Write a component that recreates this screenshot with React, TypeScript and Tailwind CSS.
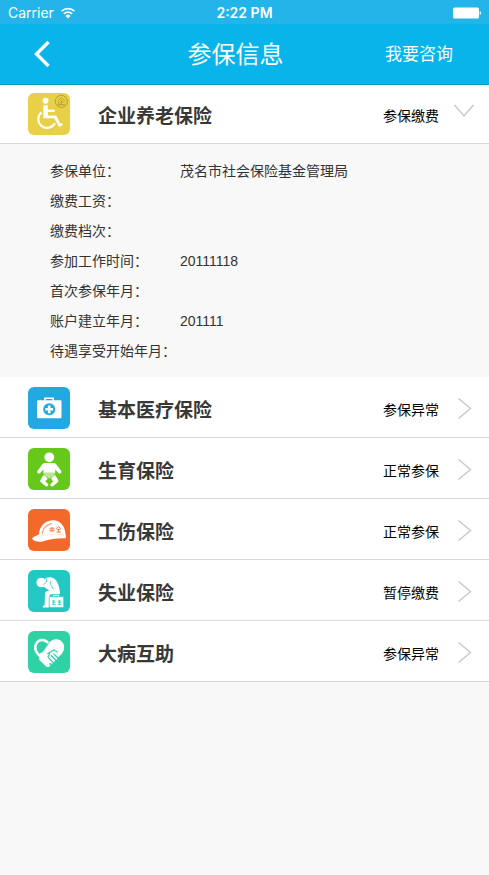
import { useState } from "react";
import type { ReactNode } from "react";

type Seguro = {
  id: string;
  name: string;
  status: string;
  icon: ReactNode;
  details?: { label: string; value: string }[];
};

function WheelchairIcon() {
  return (
    <svg viewBox="0 0 42 42" className="size-[42px]" aria-hidden="true">
      <rect width="42" height="42" rx="6" fill="#e9d147" />
      <circle cx="17.5" cy="7.8" r="3" fill="#fff" />
      <path d="M15.3 12.2h4.5v4.3l7 .2v2.3l-7-.1v3.6h8.3l4.4 8.3 1.6-.7.8 2-3.8 1.8-5-8.6H15.3z" fill="#fff" />
      <path d="M13.4 19.4a8.8 8.8 0 1 0 13.5 10.8" fill="none" stroke="#fff" strokeWidth="2.1" />
      <circle cx="33.3" cy="8.4" r="6" fill="none" stroke="#a8922b" strokeWidth=".8" />
      <path d="M29.5 8.3l3.8-3.5 3.8 3.5M33.3 7v4.7M33.3 9.2h2.3M31 8.8v2.9M29.7 11.8h7.2" fill="none" stroke="#a8922b" strokeWidth=".8" />
    </svg>
  );
}

function MedicalIcon() {
  return (
    <svg viewBox="0 0 42 42" className="size-[42px]" aria-hidden="true">
      <rect width="42" height="42" rx="6" fill="#22a9e1" />
      <path d="M17 13.5v-2.3h8.2v2.3" fill="none" stroke="#fff" strokeWidth="1.6" />
      <rect x="9" y="13.2" width="24.5" height="18" rx="1.2" fill="#fff" />
      <circle cx="21.2" cy="22.3" r="6" fill="#22a9e1" />
      <path d="M21.2 18.4v7.8M17.3 22.3h7.8" stroke="#fff" strokeWidth="2.6" />
    </svg>
  );
}

function BabyIcon() {
  return (
    <svg viewBox="0 0 42 42" className="size-[42px]" aria-hidden="true">
      <rect width="42" height="42" rx="6" fill="#67c81c" />
      <circle cx="21.3" cy="9.3" r="4.9" fill="#fff" />
      <path d="M17 15h8.6c1.2 0 2.1.5 2.8 1.5l4.7 6.2c1.3 2-1.1 3.9-2.7 2.2l-3.2-3.3v4H15.4v-4l-3.2 3.3c-1.6 1.7-4-.2-2.7-2.2l4.7-6.2c.7-1 1.6-1.5 2.8-1.5z" fill="#fff" />
      <path d="M15.4 24.6h11.8l-1.3 3.6-4.6 2.2-4.6-2.2z" fill="#b9e69a" />
      <path d="M15.4 27l4.3 3.4-2.3 3 2.5 2.3c1.5 1.7-.9 3.7-2.6 2.3l-4.5-3.7c-.8-.7-.8-1.6-.3-2.4zM27.2 27l-4.3 3.4 2.3 3-2.5 2.3c-1.5 1.7.9 3.7 2.6 2.3l4.5-3.7c.8-.7.8-1.6.3-2.4z" fill="#fff" />
    </svg>
  );
}

function HelmetIcon() {
  return (
    <svg viewBox="0 0 42 42" className="size-[42px]" aria-hidden="true">
      <rect width="42" height="42" rx="6" fill="#f4692a" />
      <path d="M4.3 29.7c-.2-1.5 2.8-2.7 6.5-4.3.8-8 6-13.6 13.2-14.1 8-.5 13.4 5.7 13.7 15.1.7.7.5 2.5-.6 2.8-8.1-.2-15 .9-22.4 3.3-4 .7-9.8-.4-10.4-2.8z" fill="#fff" />
      <path d="M14.3 25.1c.5-5.6 3.7-9.2 9.7-10.7" fill="none" stroke="#f7a581" strokeWidth="1.2" />
      <path d="M10.7 27.4c8-2 17-3 25.6-1.6" fill="none" stroke="#fbd2bf" strokeWidth=".5" />
      <path d="M21.5 19.3h5M24 18v1.4M22.7 20.3l3 2.8M25.5 20.3l-3.3 2.8M21.2 21.2h5.5M28 19.7l2.5-1.9 2.5 1.9M28.8 20.4h3.5M30.5 20v3M28.2 23h4.7" fill="none" stroke="#f4692a" strokeWidth=".8" />
    </svg>
  );
}

function UnemployedIcon() {
  return (
    <svg viewBox="0 0 42 42" className="size-[42px]" aria-hidden="true">
      <rect width="42" height="42" rx="6" fill="#23c8c2" />
      <path d="M17.5 8.2c2.6-1.5 6.8-1.3 9.2.8 3.2 3 5.2 8.6 5.4 15.6H21.8l-1 12.9h-6v-1.6l1.8-.8.4-11.4c.1-1.6.9-2.5 2.4-2.8l2.2-.5-4.6-3.6-4-2.3z" fill="#fff" />
      <circle cx="13.2" cy="12.5" r="4.8" fill="#fff" />
      <path d="M12.2 15.7l3.8-.1 6.6 4.4" fill="none" stroke="#fff" strokeWidth="2.2" />
      <path d="M18.3 8.8l.1 3.2-2.8 2.8M22.5 11.6l.5 3.7 2.2 3.5" fill="none" stroke="#23c8c2" strokeWidth=".8" strokeLinecap="round" />
      <path d="M25.4 27.4v-2.2h5.2v2.2" fill="none" stroke="#23c8c2" strokeWidth="2.2" />
      <path d="M25.4 27.4v-2.2h5.2v2.2" fill="none" stroke="#fff" strokeWidth="1" />
      <rect x="21.2" y="26.8" width="14.5" height="10.6" rx=".6" fill="#fff" stroke="#23c8c2" strokeWidth=".6" />
      <path d="M23.9 31h3.6M25.7 30v4.4M24.2 32.6h3M23.9 34.5h3.7M29.7 31h3.5M31.4 30v4.5M29.9 32.6h3M29.6 34.5h3.7" stroke="#23c8c2" strokeWidth=".7" />
    </svg>
  );
}

function HeartHandIcon() {
  return (
    <svg viewBox="0 0 42 42" className="size-[42px]" aria-hidden="true">
      <rect width="42" height="42" rx="6" fill="#2fd2a5" />
      <path d="M20.8 12.2c3.6-5.5 11.5-5.4 14.4.2 2 4 .8 8.2-2.4 11.4L21.5 35.2c-1.2 1-2.8.9-4-.2L11 28.5l3.8-7.2z" fill="#fff" />
      <path d="M20.2 12.1c-3.2-4.4-9.4-4.1-11.9.4-1.8 3.4-1.1 7.1 1.5 10.2l3.2 3.7" fill="none" stroke="#fff" strokeWidth="2.5" />
      <path d="M11.6 22.8l5.2-3.4 5.7 1.2 6.8 7.2-8.2 7.6c-1 .7-2.3.6-3.2-.3l-6.6-6.6z" fill="#fff" />
      <path d="M19.8 22.6l6.1-3.6 3.4 2M23.2 24.5l4.8 5M25.8 22.8l4.2 4.2M20.6 26.7l4.7 5.2M21.6 22.5l-1.6 3.2" fill="none" stroke="#2fd2a5" strokeWidth="1.2" strokeLinecap="round" />
      <circle cx="22.4" cy="33.2" r="1.1" fill="#2fd2a5" />
    </svg>
  );
}

const INSURANCES: Seguro[] = [
  {
    id: "pension",
    name: "企业养老保险",
    status: "参保缴费",
    icon: <WheelchairIcon />,
    details: [
      { label: "参保单位：", value: "茂名市社会保险基金管理局" },
      { label: "缴费工资：", value: "" },
      { label: "缴费档次：", value: "" },
      { label: "参加工作时间：", value: "20111118" },
      { label: "首次参保年月：", value: "" },
      { label: "账户建立年月：", value: "201111" },
      { label: "待遇享受开始年月：", value: "" },
    ],
  },
  { id: "medical",      name: "基本医疗保险", status: "参保异常", icon: <MedicalIcon /> },
  { id: "maternity",    name: "生育保险",     status: "正常参保", icon: <BabyIcon /> },
  { id: "injury",       name: "工伤保险",     status: "正常参保", icon: <HelmetIcon /> },
  { id: "unemployment", name: "失业保险",     status: "暂停缴费", icon: <UnemployedIcon /> },
  { id: "illness",      name: "大病互助",     status: "参保异常", icon: <HeartHandIcon /> },
];

function StatusBar() {
  return (
    <div className="grid h-6 grid-cols-3 items-center bg-[#23b4e9] px-2 pt-px font-['Inter','Liberation_Sans',sans-serif] text-sm text-white">
      <div className="flex items-center gap-1.5">
        <span>Carrier</span>
        <svg viewBox="0 0 16 12" className="h-3 w-4" aria-hidden="true">
          <path d="M1.6 4.2a9 9 0 0 1 12.8 0M3.9 6.9a5.8 5.8 0 0 1 8.2 0" fill="none" stroke="#fff" strokeWidth="1.7" />
          <path d="M5.5 8.9a3.5 3.5 0 0 1 5 0L8 11.5z" fill="#fff" />
        </svg>
      </div>
      <span className="text-center font-semibold">2:22 PM</span>
      <svg viewBox="0 0 29 12" className="h-3 w-[29px] justify-self-end" aria-hidden="true">
        <rect x="1" y=".5" width="26" height="11" rx="1.5" fill="#fff" />
        <path d="M27.7 4c1.6.4 1.6 3.6 0 4z" fill="#fff" />
      </svg>
    </div>
  );
}

function InsuranceRow({
  item,
  open,
  onToggle,
}: {
  item: Seguro;
  open: boolean;
  onToggle: () => void;
}) {
  return (
    <li>
      <button
        type="button"
        aria-expanded={open}
        onClick={onToggle}
        className={`flex w-full items-center border-b border-[#d9d9d9] bg-white pl-7 text-left ${
          open ? "h-[59px] pr-[14px]" : "h-[61px] pt-0.5 pr-4"
        }`}
      >
        {item.icon}
        <span className="ml-7 flex-1 pt-1.5 text-[19px] font-bold text-[#383838]">{item.name}</span>
        <span className="pt-1 text-sm text-black">{item.status}</span>
        {open ? (
          <svg viewBox="0 0 22 24" className="ml-[14px] h-6 w-[22px]" aria-hidden="true">
            <path d="M1.5 3l9.5 11L20.5 3" fill="none" stroke="#c8c8c8" strokeWidth="1.4" />
          </svg>
        ) : (
          <svg viewBox="0 0 16 24" className="ml-[18px] h-6 w-4" aria-hidden="true">
            <path d="M1.5 2.5L13.5 12.5 1.5 22.5" fill="none" stroke="#c8c8c8" strokeWidth="1.4" />
          </svg>
        )}
      </button>
      {open && item.details && (
        <dl className="px-[50px] pt-3 pb-[11px] text-sm leading-[30px] text-[#333]">
          {item.details.map(({ label, value }) => (
            <div key={label} className="flex">
              <dt className="w-[130px] shrink-0">{label}</dt>
              <dd>{value}</dd>
            </div>
          ))}
        </dl>
      )}
    </li>
  );
}

export default function App() {
  const [openId, setOpenId] = useState<string | null>("pension");

  return (
    <div className="min-h-screen bg-[#f8f8f8] font-['Liberation_Sans','Noto_Sans_CJK_SC',sans-serif]">
      <StatusBar />
      <header className="grid h-[61px] grid-cols-[1fr_auto_1fr] items-center border-b border-[#1594c0] bg-[#09b4eb] text-white">
        <button type="button" aria-label="返回" className="ml-8 w-5">
          <svg viewBox="0 0 20 28" className="h-7 w-5" aria-hidden="true">
            <path d="M16.5 2L4.5 14 16.5 26" fill="none" stroke="#fff" strokeWidth="3.4" />
          </svg>
        </button>
        <h1 className="mr-[18px] pt-0.5 text-2xl font-normal">参保信息</h1>
        <button type="button" className="mr-9 justify-self-end pt-0.5 text-[17px]">
          我要咨询
        </button>
      </header>
      <ul>
        {INSURANCES.map((item) => (
          <InsuranceRow
            key={item.id}
            item={item}
            open={openId === item.id}
            onToggle={() => setOpenId(openId === item.id ? null : item.id)}
          />
        ))}
      </ul>
    </div>
  );
}
